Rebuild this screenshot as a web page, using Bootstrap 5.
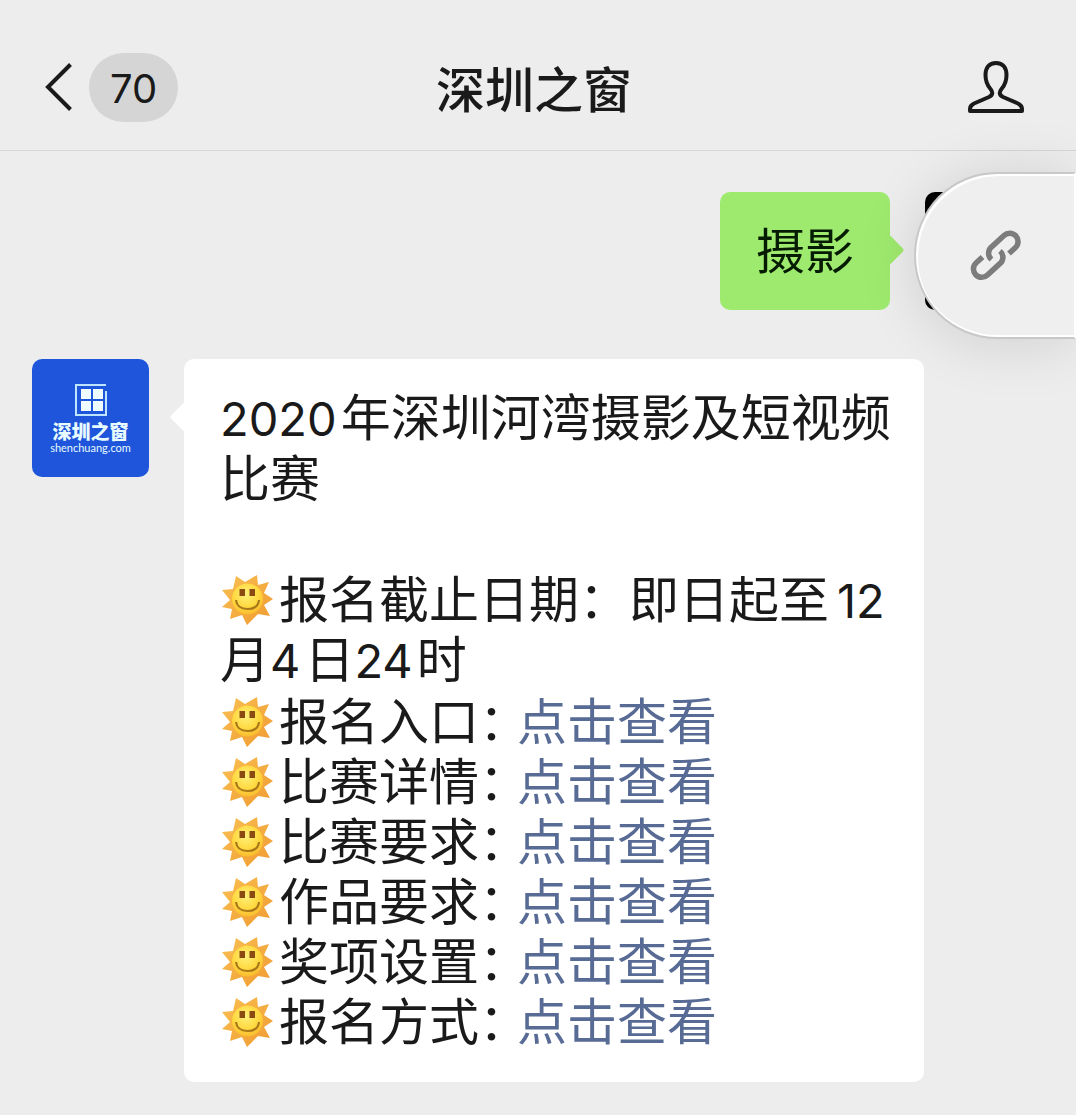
<!DOCTYPE html>
<html lang="zh-CN">
<head>
<meta charset="utf-8">
<meta name="viewport" content="width=device-width, initial-scale=1">
<title>深圳之窗</title>
<link rel="stylesheet" href="https://cdn.jsdelivr.net/npm/bootstrap@5.3.0/dist/css/bootstrap.min.css">
<style>
  body { background: #ededed; color: #1a1a1a; font-family: "Noto Sans CJK SC", sans-serif; font-size: 50px; line-height: 60px; overflow-x: hidden; }
  .chat-bar { height: 151px; padding: 24px 52px 0 44px; border-bottom: 1px solid #d6d6d6; }
  .chat-side { flex: 1 1 0; }
  .chat-title { font-size: 49px; font-weight: 500; line-height: 60px; }
  .unread { width: 89px; height: 69px; padding-top: 3px; border-radius: 35px; background: #d5d5d5; font-family: Inter, sans-serif; font-size: 40px; font-weight: 400; color: #1a1a1a; }
  .chat-log { padding: 41px 34px 33px 32px; }
  .sent-row { margin-bottom: 49px; }
  .avatar { width: 117px; height: 118px; border-radius: 10px; }
  .avatar-me { background: #000; }
  .avatar-site { background: #1e55da; color: #e8fbff; }
  .site-name { font-size: 19px; font-weight: 900; line-height: 20px; }
  .site-url { font-family: Lato, sans-serif; font-size: 11px; line-height: 13px; }
  .bubble { border-radius: 10px; position: relative; }
  .bubble::after { content: ""; position: absolute; width: 22px; height: 22px; border-radius: 3px; transform: rotate(45deg); background: inherit; top: 47px; }
  .bubble-out { background: #9eea6e; color: #061c02; padding: 26px 36px 32px; margin-right: 35px; }
  .bubble-out::after { right: -10px; }
  .bubble-out p { font-size: 49px; }
  .bubble-in { background: #fff; width: 740px; padding: 25px 24px 34px 36px; margin-left: 35px; }
  .bubble-in::after { left: -10px; }
  .msg-title { line-height: 61px; margin-bottom: 60px; }
  .msg-links { padding-top: 2px; }
  .num { font-family: Inter, sans-serif; font-size: 47px; line-height: 1; margin-right: 4px; }
  .num-wide { margin-left: 8px; }
  .sun { width: 52px; height: 52px; margin: 0 6px 0 1px; vertical-align: -7px; }
  .item-label { display: inline-block; width: 238px; white-space: nowrap; }
  .bubble-in a { color: #576b95; text-decoration: none; }
  .link-tab { top: 172px; right: 0; width: 162px; height: 167px; border: 2px solid #c8c8c8; border-right: 2px solid #fff; border-radius: 83px 0 0 83px; background: #efefef; box-shadow: inset 2px 2px 0 #fff, inset 0 -2px 0 #fff, 0 4px 60px rgba(0,0,0,.13); }
</style>
<script src="https://cdn.jsdelivr.net/npm/bootstrap@5.3.0/dist/js/bootstrap.bundle.min.js"></script>
</head>
<body>
<svg class="position-absolute" width="0" height="0" aria-hidden="true">
  <defs>
    <radialGradient id="face" cx=".45" cy=".35" r=".7"><stop offset="0" stop-color="#fff07a"/><stop offset=".6" stop-color="#ffd83e"/><stop offset="1" stop-color="#f9b52c"/></radialGradient>
    <linearGradient id="rays" x1="0" y1="0" x2="1" y2="1"><stop offset="0" stop-color="#f9c053"/><stop offset="1" stop-color="#f09a30"/></linearGradient>
    <symbol id="sun" viewBox="0 0 52 52"><path fill="url(#rays)" d="M26 52 21 42 9 46 11 36 1 34 9 27 1 17 12 16 15 3 24 9 36 2 37 12 48 9 43 20 52 26 43 32 49 43 37 41Z"/><circle cx="26.500" cy="26" r="15.500" fill="url(#face)"/><path fill="#8a4a12" d="M18.500 16H24V23H18.500ZM28.500 16H34V23H28.500Z"/><path d="M15 27Q16 36 26.500 36T38 27" fill="none" stroke="#a8781a" stroke-width="2.200"/></symbol>
  </defs>
</svg>
<header class="chat-bar d-flex align-items-center">
  <div class="chat-side d-flex align-items-center">
    <button class="btn p-0 border-0 d-flex align-items-center" type="button" aria-label="返回">
      <svg width="45" height="50" viewBox="0 0 45 50" fill="none" stroke="#1a1a1a" stroke-width="4"><path d="M26.500 2.500 4 25 26.500 47.500"/></svg>
      <span class="unread d-flex align-items-center justify-content-center">70</span>
    </button>
  </div>
  <h1 class="chat-title m-0">深圳之窗</h1>
  <div class="chat-side d-flex justify-content-end">
    <button class="btn p-0 border-0 d-flex" type="button" aria-label="账号资料">
      <svg width="56" height="54" viewBox="0 0 56 54" fill="none" stroke="#1a1a1a" stroke-width="4" stroke-linejoin="round"><path d="M28 3C21 3 17.500 8 17.500 15C17.500 22 19 25 22.500 29C25 32 25 35 21 37L6 43.500Q2 45.500 2 49V51H54V49Q54 45.500 50 43.500L35 37C31 35 31 32 33.500 29C37 25 38.500 22 38.500 15C38.500 8 35 3 28 3Z"/></svg>
    </button>
  </div>
</header>

<main class="chat-log">
  <div class="sent-row d-flex justify-content-end align-items-start">
    <div class="bubble bubble-out"><p class="m-0">摄影</p></div>
    <div class="avatar avatar-me flex-shrink-0"></div>
  </div>

  <div class="d-flex align-items-start">
    <div class="avatar avatar-site flex-shrink-0 d-flex flex-column align-items-center justify-content-center">
      <svg width="34" height="34" viewBox="0 0 34 34" aria-hidden="true"><path d="M32 2H2V32H32V8" fill="none" stroke="#bfe4ff" stroke-width="2"/><path d="M7 6H17V16H7ZM19 6H29V16H19ZM7 18H17V28H7ZM19 18H29V28H19Z" fill="#effcff"/></svg>
      <span class="site-name mt-1">深圳之窗</span>
      <span class="site-url">shenchuang.com</span>
    </div>
    <article class="bubble bubble-in">
      <p class="msg-title"><span class="num">2020</span>年深圳河湾摄影及短视频比赛</p>
      <p class="m-0"><svg class="sun" aria-hidden="true"><use href="#sun"/></svg>报名截止日期：即日起至<span class="num num-wide">12</span>月<span class="num">4</span>日<span class="num">24</span>时</p>
      <ul class="msg-links list-unstyled m-0">
        <li><svg class="sun" aria-hidden="true"><use href="#sun"/></svg><span class="item-label">报名入口：</span><a href="#entry">点击查看</a></li>
        <li><svg class="sun" aria-hidden="true"><use href="#sun"/></svg><span class="item-label">比赛详情：</span><a href="#details">点击查看</a></li>
        <li><svg class="sun" aria-hidden="true"><use href="#sun"/></svg><span class="item-label">比赛要求：</span><a href="#rules">点击查看</a></li>
        <li><svg class="sun" aria-hidden="true"><use href="#sun"/></svg><span class="item-label">作品要求：</span><a href="#works">点击查看</a></li>
        <li><svg class="sun" aria-hidden="true"><use href="#sun"/></svg><span class="item-label">奖项设置：</span><a href="#awards">点击查看</a></li>
        <li><svg class="sun" aria-hidden="true"><use href="#sun"/></svg><span class="item-label">报名方式：</span><a href="#apply">点击查看</a></li>
      </ul>
    </article>
  </div>
</main>

<button class="link-tab position-absolute d-flex align-items-center justify-content-center p-0" type="button" aria-label="链接">
  <svg width="54" height="54" viewBox="0 0 54 54" fill="none" stroke="#7c7c7c" stroke-width="5.500"><path d="M14.500 28 8 34A8.300 8.300 0 0 0 19.500 46L31.500 35A8.300 8.300 0 0 0 32 22"/><path d="M41 24.500 47.500 18.500A8.300 8.300 0 0 0 36 6.500L24 17.500A8.300 8.300 0 0 0 23.500 30.500"/></svg>
</button>
</body>
</html>
